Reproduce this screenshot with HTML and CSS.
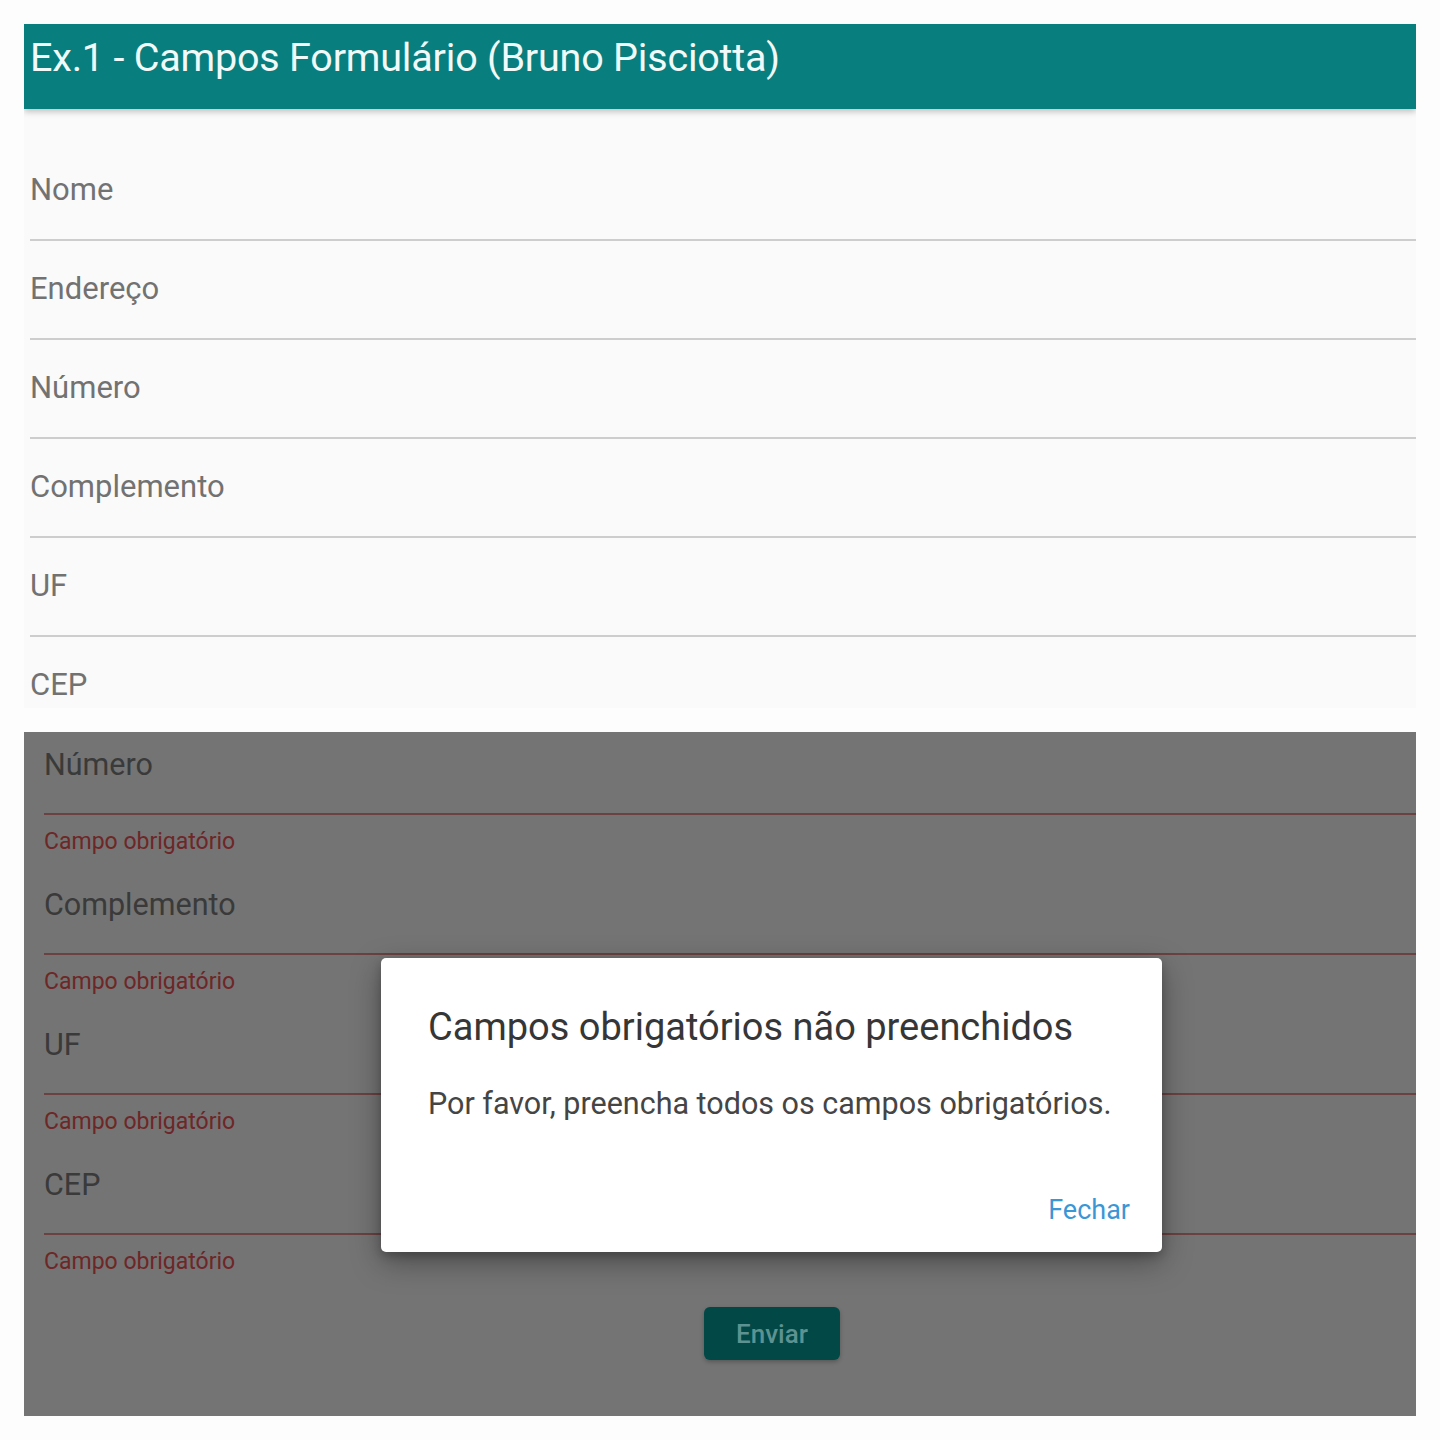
FILE: index.html
```html
<!DOCTYPE html>
<html lang="pt-BR">
<head>
<meta charset="utf-8">
<title>Ex.1 - Campos Formulário</title>
<link rel="stylesheet" href="styles.css">
</head>
<body>
<div class="collage">
  <section class="panel panel-top">
    <header class="appbar"><h1 class="appbar-title">Ex.1 - Campos Formulário (Bruno Pisciotta)</h1></header>
    <div class="form">
      <div class="field"><span class="label">Nome</span></div>
      <div class="field"><span class="label">Endereço</span></div>
      <div class="field"><span class="label">Número</span></div>
      <div class="field"><span class="label">Complemento</span></div>
      <div class="field"><span class="label">UF</span></div>
      <div class="field field-last"><span class="label">CEP</span></div>
    </div>
  </section>

  <section class="panel panel-bottom">
    <div class="screen">
      <div class="err-field">
        <div class="err-input"><span class="label dim">Número</span></div>
        <div class="err-msg">Campo obrigatório</div>
      </div>
      <div class="err-field">
        <div class="err-input"><span class="label dim">Complemento</span></div>
        <div class="err-msg">Campo obrigatório</div>
      </div>
      <div class="err-field">
        <div class="err-input"><span class="label dim">UF</span></div>
        <div class="err-msg">Campo obrigatório</div>
      </div>
      <div class="err-field">
        <div class="err-input"><span class="label dim">CEP</span></div>
        <div class="err-msg">Campo obrigatório</div>
      </div>
      <div class="actions"><button class="btn-send">Enviar</button></div>

      <div class="dialog">
        <h2 class="dialog-title">Campos obrigatórios não preenchidos</h2>
        <p class="dialog-body">Por favor, preencha todos os campos obrigatórios.</p>
        <div class="dialog-actions"><button class="btn-text">Fechar</button></div>
      </div>
    </div>
  </section>
</div>
</body>
</html>
```

FILE: styles.css
```css
* { box-sizing: border-box; }
html, body { margin: 0; padding: 0; }
body {
  background: #fdfdfd;
  font-family: Roboto, "Noto Sans", "Liberation Sans", sans-serif;
  width: 1440px;
  height: 1440px;
  overflow: hidden;
}
.collage {
  padding: 24px;
  display: flex;
  flex-direction: column;
  gap: 24px;
}
.panel {
  width: 1392px;
  height: 684px;
  overflow: hidden;
  position: relative;
}
.panel-top { background: #fafafa; }
.appbar {
  height: 85px;
  background: #087f7e;
  padding: 11px 0 0 6px;
  box-shadow: 0 3px 6px rgba(0,0,0,0.22);
  position: relative;
  z-index: 1;
}
.appbar-title {
  margin: 0;
  font-weight: 400;
  font-size: 39.5px;
  line-height: 46px;
  color: #f2faf9;
  letter-spacing: -0.2px;
}
.form { padding: 33px 0 0 6px; }
.field {
  padding: 30px 0 31px;
  border-bottom: 2px solid #cdcdcd;
}
.field-last { border-bottom: none; }
.label {
  display: block;
  font-size: 31px;
  line-height: 36px;
  color: #727272;
}

.panel-bottom { background: #747474; }
.screen {
  width: 1496px;
  padding: 15px 0 0 20px;
  position: relative;
  height: 684px;
}
.err-field { padding-bottom: 30px; }
.err-field + .err-field { padding-top: 1px; }
.err-input {
  padding-bottom: 30px;
  border-bottom: 2px solid #6b4141;
}
.label.dim { color: #3a3a3a; font-size: 30.5px; }
.err-msg {
  margin-top: 13px;
  font-size: 23px;
  line-height: 28px;
  color: #6e2626;
}
.actions {
  display: flex;
  justify-content: center;
  padding-top: 1px;
  margin-left: -20px;
}
.btn-send {
  width: 136px;
  height: 53px;
  border: none;
  border-radius: 6px;
  background: #014847;
  color: #5e9291;
  font-family: Roboto, "Noto Sans", sans-serif;
  font-size: 26px;
  font-weight: 500;
  box-shadow: 0 2px 4px rgba(0,0,0,0.25);
}
.dialog {
  position: absolute;
  left: 357px;
  top: 226px;
  width: 781px;
  height: 294px;
  background: #ffffff;
  border-radius: 5px;
  box-shadow: 0 10px 30px rgba(0,0,0,0.35), 0 4px 10px rgba(0,0,0,0.2);
  padding: 47px 32px 0 47px;
  display: flex;
  flex-direction: column;
}
.dialog-title {
  margin: 0;
  font-size: 38px;
  font-weight: 400;
  line-height: 44px;
  color: #363636;
}
.dialog-body {
  margin: 38px 0 0;
  font-size: 30.5px;
  line-height: 34px;
  color: #454545;
}
.dialog-actions {
  display: flex;
  justify-content: flex-end;
  margin-top: 73px;
}
.btn-text {
  border: none;
  background: none;
  padding: 0;
  font-family: Roboto, "Noto Sans", sans-serif;
  font-size: 27px;
  line-height: 32px;
  color: #3a97d6;
}
```
